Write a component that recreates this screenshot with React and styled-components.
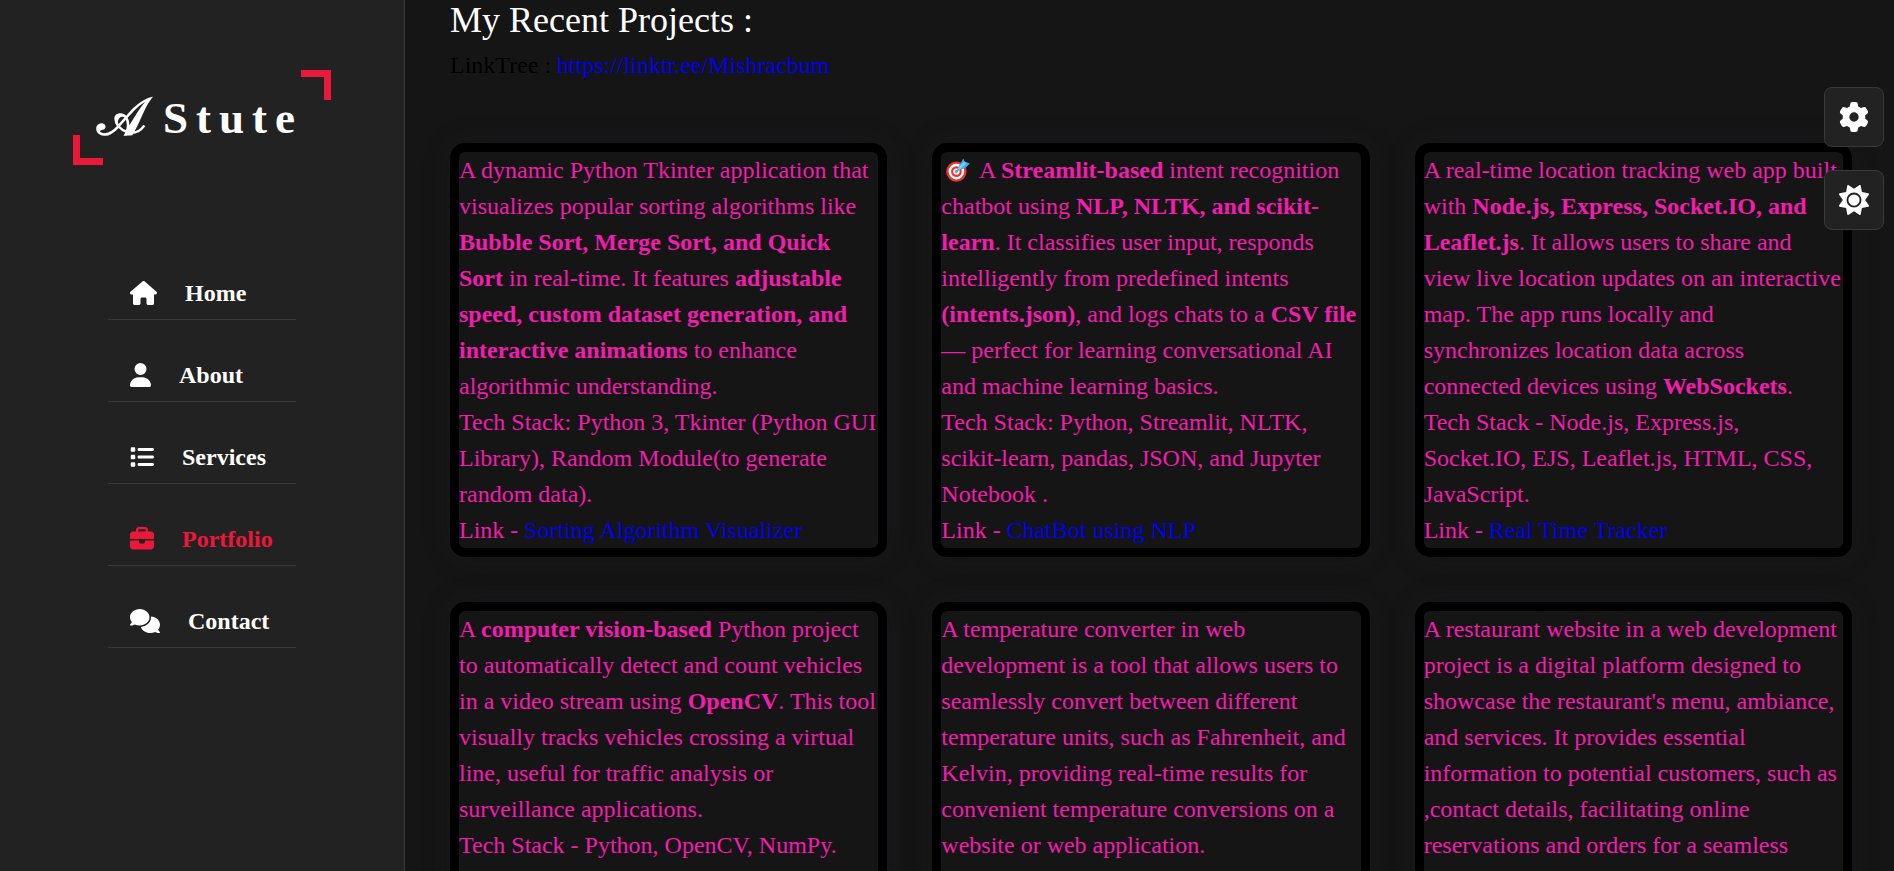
import React from "react";
import styled, { createGlobalStyle } from "styled-components";
import { FaHouse, FaUser, FaList, FaBriefcase, FaComments, FaGear, FaSun } from "react-icons/fa6";

const GlobalStyle = createGlobalStyle`
  *, *::before, *::after { box-sizing: border-box; }
  body {
    margin: 0;
    background: #151515;
    color: #000;
    font: 24px/36px "Liberation Serif", "Times New Roman", serif;
  }
  a { text-decoration: none; }
`;

const Page = styled.div`
  display: flex;
  height: 100vh;
`;

const Sidebar = styled.aside`
  flex: 0 0 405px;
  display: flex;
  flex-direction: column;
  align-items: center;
  gap: 102px;
  padding: 70px 0;
  background: #222;
  border-right: 1px solid #393939;
`;

const Logo = styled.a`
  position: relative;
  display: flex;
  align-items: center;
  width: 258px;
  height: 95px;
  padding-left: 24px;
  color: #fff;
  font-size: 45px;
  font-weight: 700;
  letter-spacing: 8px;
  line-height: 68px;

  &::before,
  &::after {
    content: "";
    position: absolute;
    width: 30px;
    height: 30px;
    border: 0 solid #ec1839;
  }
  &::before {
    left: 0;
    bottom: 0;
    border-width: 0 0 7px 7px;
  }
  &::after {
    right: 0;
    top: 0;
    border-width: 7px 7px 0 0;
  }
`;

const Script = styled.span`
  flex: 0 0 66px;
  font-size: 52px;
  letter-spacing: normal;
`;

const NavList = styled.ul`
  width: 188px;
  margin: 0;
  padding: 0;
  list-style: none;
`;

const NavItem = styled.li`
  margin-bottom: 29px;
  border-bottom: 1px solid #393939;
`;

const NavLink = styled.a`
  display: flex;
  align-items: center;
  gap: 28px;
  padding: 8px 22px;
  color: ${(p) => (p.$active ? "#ec1839" : "#fff")};
  font-weight: 700;
`;

const NavIcon = styled.span`
  flex: 0 0 ${(p) => p.$width}px;
  height: 24px;

  svg {
    display: block;
    width: 100%;
    height: 100%;
  }
`;

const Main = styled.main`
  flex: 1;
  min-width: 0;
  overflow-y: auto;
  scrollbar-width: none;
  padding: 0 42px 45px 45px;
`;

const Title = styled.h2`
  margin: 0 0 7px;
  color: #fff;
  font-size: 36px;
  font-weight: 400;
  line-height: 40px;
`;

const LinkTree = styled.p`
  margin: 0 0 60px;
`;

const TextLink = styled.a`
  color: #00e;
`;

const Grid = styled.div`
  display: grid;
  grid-template-columns: repeat(3, 1fr);
  grid-auto-rows: minmax(414px, auto);
  gap: 45px;
`;

const Card = styled.article`
  border: 9px solid #000;
  border-radius: 15px;
  box-shadow: 0 0 30px rgba(48, 46, 77, 0.15);
  color: #f21caf;

  p { margin: 0; }
`;

const Target = styled.svg`
  width: 24px;
  height: 24px;
  margin: 0 4px 0 5px;
  vertical-align: -4px;
`;

const Tools = styled.div`
  position: fixed;
  top: 87px;
  right: 10px;
  display: grid;
  gap: 23px;
`;

const ToolButton = styled.button`
  display: grid;
  place-items: center;
  width: 60px;
  height: 60px;
  padding: 0;
  border: 1px solid #393939;
  border-radius: 8px;
  background: #222;
  color: #fff;
  font-size: 30px;
`;

const navItems = [
  { label: "Home", Icon: FaHouse, width: 27 },
  { label: "About", Icon: FaUser, width: 21 },
  { label: "Services", Icon: FaList, width: 24 },
  { label: "Portfolio", Icon: FaBriefcase, width: 24, active: true },
  { label: "Contact", Icon: FaComments, width: 30 },
];

const TargetIcon = () => (
  <Target viewBox="0 0 24 24" role="img" aria-label="Target">
    <circle cx="10.4" cy="13.6" r="10.2" fill="#e8352e" />
    <circle cx="10.4" cy="13.6" r="7.8" fill="#fff" />
    <circle cx="10.4" cy="13.6" r="5.4" fill="#e8352e" />
    <circle cx="10.4" cy="13.6" r="3.2" fill="#fff" />
    <circle cx="10.4" cy="13.6" r="1.3" fill="#e8352e" />
    <path d="M10.4 13.6 16 8" stroke="#2cb5ee" strokeWidth="1.6" strokeLinecap="round" />
    <path d="M12 9 15.4 4.2 17.2 0.4 18.6 3.6 23.8 5.6 20.2 9.2 15.6 11.8Z" fill="#46a8f5" />
    <path d="M12.6 11.2 19 4.6" stroke="#5ee0fb" strokeWidth="2.4" />
  </Target>
);

const projects = [
  {
    about: (
      <>
        A dynamic Python Tkinter application that visualizes popular sorting algorithms like{" "}
        <b>Bubble Sort, Merge Sort, and Quick Sort</b> in real-time. It features{" "}
        <b>adjustable speed, custom dataset generation, and interactive animations</b> to enhance
        algorithmic understanding.
      </>
    ),
    stack: "Tech Stack: Python 3, Tkinter (Python GUI Library), Random Module(to generate random data).",
    link: "Sorting Algorithm Visualizer",
  },
  {
    about: (
      <>
        <TargetIcon /> A <b>Streamlit-based</b> intent recognition chatbot using{" "}
        <b>NLP, NLTK, and scikit-learn</b>. It classifies user input, responds intelligently from
        predefined intents <b>(intents.json)</b>, and logs chats to a <b>CSV file</b> — perfect for
        learning conversational AI and machine learning basics.
      </>
    ),
    stack: "Tech Stack: Python, Streamlit, NLTK, scikit-learn, pandas, JSON, and Jupyter Notebook .",
    link: "ChatBot using NLP",
  },
  {
    about: (
      <>
        A real-time location tracking web app built with{" "}
        <b>Node.js, Express, Socket.IO, and Leaflet.js</b>. It allows users to share and view live
        location updates on an interactive map. The app runs locally and synchronizes location data
        across connected devices using <b>WebSockets</b>.
      </>
    ),
    stack: "Tech Stack - Node.js, Express.js, Socket.IO, EJS, Leaflet.js, HTML, CSS, JavaScript.",
    link: "Real Time Tracker",
  },
  {
    about: (
      <>
        A <b>computer vision-based</b> Python project to automatically detect and count vehicles in a
        video stream using <b>OpenCV</b>. This tool visually tracks vehicles crossing a virtual line,
        useful for traffic analysis or surveillance applications.
      </>
    ),
    stack: "Tech Stack - Python, OpenCV, NumPy.",
  },
  {
    about:
      "A temperature converter in web development is a tool that allows users to seamlessly convert between different temperature units, such as Fahrenheit, and Kelvin, providing real-time results for convenient temperature conversions on a website or web application.",
  },
  {
    about:
      "A restaurant website in a web development project is a digital platform designed to showcase the restaurant's menu, ambiance, and services. It provides essential information to potential customers, such as ,contact details, facilitating online reservations and orders for a seamless",
  },
];

export default function App() {
  return (
    <>
      <GlobalStyle />
      <Page>
        <Sidebar>
          <Logo href="#home">
            <Script>𝒜</Script>
            <span>Stute</span>
          </Logo>
          <nav>
            <NavList>
              {navItems.map(({ label, Icon, width, active }) => (
                <NavItem key={label}>
                  <NavLink href={`#${label.toLowerCase()}`} $active={active}>
                    <NavIcon $width={width}>
                      <Icon aria-hidden="true" />
                    </NavIcon>
                    {label}
                  </NavLink>
                </NavItem>
              ))}
            </NavList>
          </nav>
        </Sidebar>
        <Main>
          <Title>My Recent Projects :</Title>
          <LinkTree>
            LinkTree : <TextLink href="https://linktr.ee/Mishracbum">https://linktr.ee/Mishracbum</TextLink>
          </LinkTree>
          <Grid>
            {projects.map(({ about, stack, link }, i) => (
              <Card key={i}>
                <p>{about}</p>
                {stack && <p>{stack}</p>}
                {link && (
                  <p>
                    Link - <TextLink href="#portfolio">{link}</TextLink>
                  </p>
                )}
              </Card>
            ))}
          </Grid>
        </Main>
        <Tools>
          <ToolButton type="button" aria-label="Theme colours">
            <FaGear />
          </ToolButton>
          <ToolButton type="button" aria-label="Light mode">
            <FaSun />
          </ToolButton>
        </Tools>
      </Page>
    </>
  );
}
